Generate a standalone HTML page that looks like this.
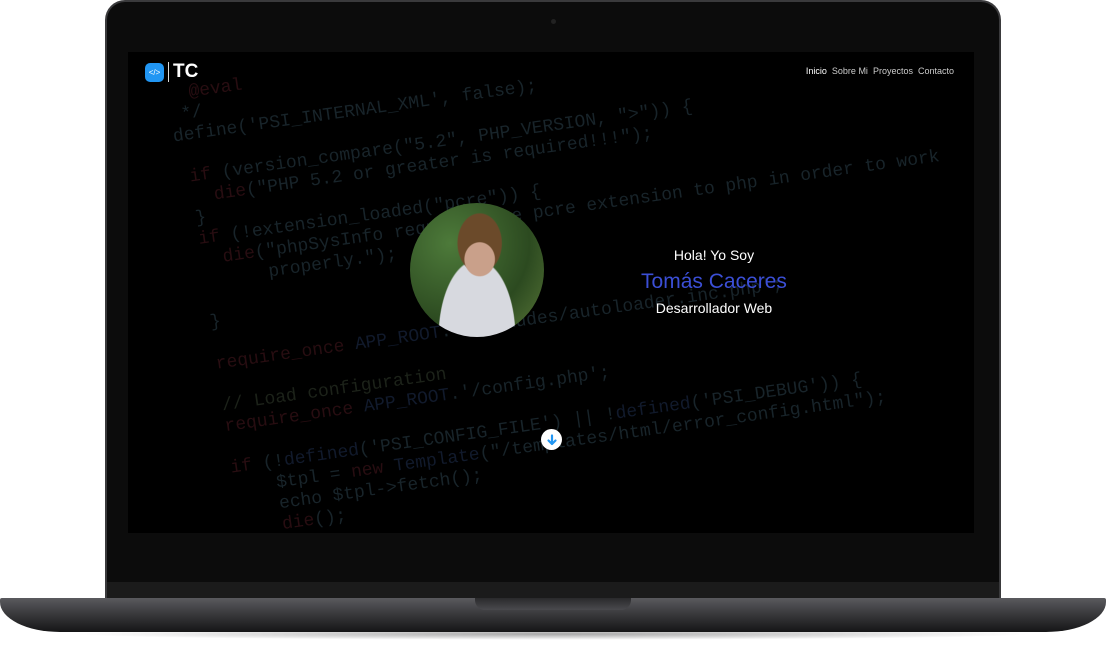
<!DOCTYPE html>
<html><head><meta charset="utf-8"><style>
*{margin:0;padding:0;box-sizing:border-box}
html,body{width:1106px;height:651px;overflow:hidden}
body{background:#fff;position:relative;font-family:"Liberation Sans",sans-serif}
.lid{position:absolute;left:105px;top:0;width:896px;height:600px;background:#0c0c0c;border-radius:20px 20px 0 0;border:2px solid #3a3a3c;border-bottom:none}
.cam{position:absolute;left:444px;top:17px;width:5px;height:5px;border-radius:50%;background:#222}
.strip{position:absolute;left:107px;top:582px;width:892px;height:17px;background:#1b1b1b}
.screen{position:absolute;left:128px;top:52px;width:846px;height:481px;background:#000;overflow:hidden}
.code{position:absolute;left:38px;top:34px;transform:rotate(-8deg);transform-origin:0 0;font-family:"Liberation Mono",monospace;font-size:18px;line-height:21px;color:#18242a;white-space:pre}
.code .r{color:#280d11}.code .b{color:#111a2c}.code .g{color:#1c2219}
.base{position:absolute;left:0;top:598px;width:1106px;height:34px;background:linear-gradient(#5a5a5e,#3a3a3d 45%,#2a2a2c 70%,#151516);border-radius:2px 2px 60px 60px / 2px 2px 30px 30px}
.shadow{position:absolute;left:70px;top:628px;width:966px;height:12px;background:radial-gradient(ellipse at center,rgba(0,0,0,.35),rgba(0,0,0,0) 70%)}
.notch{position:absolute;left:475px;top:598px;width:156px;height:12px;background:linear-gradient(#2a2a2c,#4a4a4e);border-radius:0 0 10px 10px}
.nav{position:absolute;right:20px;top:14px;font-size:9px;color:#ccc}
.nav span{margin-left:5px}
.logo{position:absolute;left:17px;top:9px;display:flex;align-items:center}
.ic{width:19px;height:19px;border-radius:5px;background:#2196f3;color:#fff;font-size:8px;display:flex;align-items:center;justify-content:center}
.bar{width:1px;height:20px;background:#ddd;margin:0 4px}
.tc{color:#fff;font-weight:bold;font-size:19px}
.photo{position:absolute;left:282px;top:151px;width:134px;height:134px;border-radius:50%;background:radial-gradient(ellipse at 52% 42%,#c9a08a 0 15%,transparent 16%),radial-gradient(ellipse at 52% 30%,#6b4a2a 0 22%,transparent 23%),radial-gradient(ellipse at 50% 100%,#d7d9df 0 40%,transparent 41%),radial-gradient(circle at 30% 30%,#4d7a3a,#2c4a20 60%,#5c7a3a);overflow:hidden}
.txt{position:absolute;left:480px;top:193px;width:212px;text-align:center;color:#fff;font-family:"Liberation Sans",sans-serif}
.arrow{position:absolute;left:413px;top:377px;width:21px;height:21px;border-radius:50%;background:#fff;display:flex;align-items:center;justify-content:center}
</style></head><body>
<div class="lid"><div class="cam"></div></div>
<div class="strip"></div>
<div class="screen">
<div class="code">  <span class="r">@eval</span>
 */
define('PSI_INTERNAL_XML', false);

 <span class="r">if</span> (version_compare("5.2", PHP_VERSION, ">")) {
   <span class="r">die</span>("PHP 5.2 or greater is required!!!");
 }
 <span class="r">if</span> (!extension_loaded("pcre")) {
   <span class="r">die</span>("phpSysInfo requires the pcre extension to php in order to work
       properly.");

 }

 <span class="r">require_once</span> <span class="b">APP_ROOT</span>.'/includes/autoloader.inc.php';

 <span class="g">// Load configuration</span>
 <span class="r">require_once</span> <span class="b">APP_ROOT</span>.'/config.php';

 <span class="r">if</span> (!<span class="b">defined</span>('PSI_CONFIG_FILE') || !<span class="b">defined</span>('PSI_DEBUG')) {
     $tpl = <span class="r">new</span> <span class="b">Template</span>("/templates/html/error_config.html");
     echo $tpl->fetch();
     <span class="r">die</span>();</div>
<div class="logo"><div class="ic">&lt;/&gt;</div><div class="bar"></div><div class="tc">TC</div></div>
<div class="nav"><span style="color:#fff">Inicio</span><span>Sobre Mi</span><span>Proyectos</span><span>Contacto</span></div>
<div class="photo"></div>
<div class="txt"><div style="font-size:14px;line-height:20px">Hola! Yo Soy</div><div style="font-size:21px;line-height:34px;color:#3b4fd6">Tomás Caceres</div><div style="font-size:14px;line-height:18px">Desarrollador Web</div></div>
<div class="arrow"><svg width="12" height="12" viewBox="0 0 12 12"><path d="M6 1.5V10M2.5 6.5L6 10L9.5 6.5" stroke="#2196f3" stroke-width="2.2" fill="none" stroke-linecap="round" stroke-linejoin="round"/></svg></div>
</div>
<div class="shadow"></div>
<div class="base"></div>
<div class="notch"></div>
</body></html>
